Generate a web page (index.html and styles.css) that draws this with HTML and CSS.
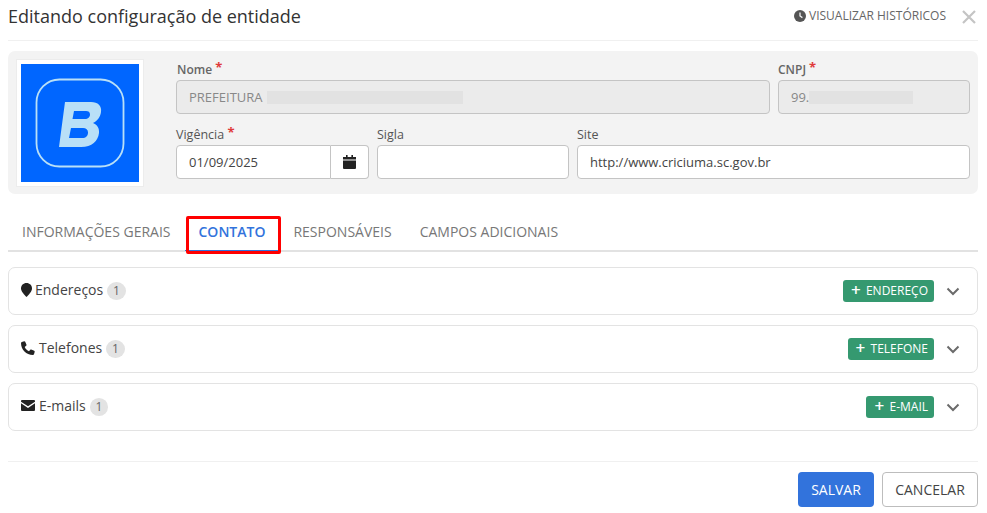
FILE: index.html
```html
<!DOCTYPE html>
<html lang="pt-BR">
<head>
<meta charset="utf-8">
<title>Editando configuração de entidade</title>
<link rel="stylesheet" href="styles.css">
</head>
<body>
<div class="modal">
  <header class="head">
    <h1 class="title">Editando configuração de entidade</h1>
    <div class="head-actions">
      <a class="history">
        <svg class="ic-clock" viewBox="0 0 12 12"><circle cx="6" cy="6" r="6" fill="#555"/><path d="M6 2.6V6l2.4 1.6" fill="none" stroke="#f3f3f3" stroke-width="1.3"/></svg>
        VISUALIZAR HISTÓRICOS
      </a>
      <svg class="ic-close" viewBox="0 0 14 14"><path d="M1 1l12 12M13 1L1 13" stroke="#c4c4c4" stroke-width="2.2" fill="none"/></svg>
    </div>
  </header>

  <section class="panel">
    <div class="logo-box">
      <div class="logo">
        <svg viewBox="0 0 118 118" class="logo-svg">
          <rect x="15.5" y="15.5" width="87" height="87" rx="23" fill="none" stroke="#b9e0f7" stroke-width="1.8"/>
          <path d="M44 38H70C77 38 81 42 80 48C79.500 53 76 57 72 59C76 60.500 78.500 64 78 69C77 77 71 83 60 83H38ZM53 47L51.500 55H64C67 55 69 53 69 50.500C69 48 67.500 47 65 47ZM50 64L48 74H61C65 74 67 72 67 68.500C67 65.500 65 64 62 64Z" fill="#b9e0f7" fill-rule="evenodd"/>
        </svg>
      </div>
    </div>
    <div class="fields">
      <div class="row row-top">
        <div class="field f-nome">
          <label class="lbl">Nome <span class="req">*</span></label>
          <div class="ctrl disabled"><span>PREFEITURA</span><span class="redact r-nome"></span></div>
        </div>
        <div class="field f-cnpj">
          <label class="lbl">CNPJ <span class="req">*</span></label>
          <div class="ctrl disabled"><span>99.</span><span class="redact r-cnpj"></span></div>
        </div>
      </div>
      <div class="row row-bottom">
        <div class="field f-vig">
          <label class="lbl">Vigência <span class="req">*</span></label>
          <div class="group">
            <div class="ctrl ctrl-date">01/09/2025</div>
            <div class="addon">
              <svg class="ic-cal" viewBox="0 0 13 14"><path d="M3 0h1.600v2H3zM8.400 0H10v2H8.400zM0 2h13v2.500H0zM0 5.500h13V13a1 1 0 0 1-1 1H1a1 1 0 0 1-1-1z" fill="#222"/></svg>
            </div>
          </div>
        </div>
        <div class="field f-sigla">
          <label class="lbl">Sigla</label>
          <div class="ctrl"></div>
        </div>
        <div class="field f-site">
          <label class="lbl">Site</label>
          <div class="ctrl">http://www.criciuma.sc.gov.br</div>
        </div>
      </div>
    </div>
  </section>

  <nav class="tabs">
    <a class="tab">INFORMAÇÕES GERAIS</a>
    <a class="tab active">CONTATO</a>
    <a class="tab">RESPONSÁVEIS</a>
    <a class="tab">CAMPOS ADICIONAIS</a>
  </nav>

  <section class="cards">
    <div class="card">
      <svg class="ic ic-pin" viewBox="0 0 11 14"><path d="M5.500 0C8.600 0 11 2.300 11 5.300 11 8.500 7.500 12 5.500 14 3.500 12 0 8.500 0 5.300 0 2.300 2.400 0 5.500 0z" fill="#222"/></svg>
      <span class="c-title t-end">Endereços</span><span class="badge">1</span>
      <span class="spacer"></span>
      <a class="add"><span class="plus">+</span>ENDEREÇO</a>
      <svg class="chev" viewBox="0 0 14 9"><path d="M1.500 1.500L7 7l5.500-5.500" fill="none" stroke="#6b6b6b" stroke-width="2"/></svg>
    </div>
    <div class="card">
      <svg class="ic ic-phone" viewBox="0 0 14 14"><path d="M3.200.300L.8 1C.300 1.200 0 1.600 0 2.100 0 8.700 5.300 14 11.900 14c.5 0 .9-.3 1.100-.8l.7-2.400c.1-.4-.1-.8-.5-1l-3-1.300c-.3-.1-.7 0-.9.300L8 10.300C5.900 9.300 4.700 8.100 3.700 6l1.500-1.300c.3-.2.4-.6.300-.9L4.200.800c-.2-.4-.6-.6-1-.5z" fill="#222"/></svg>
      <span class="c-title t-tel">Telefones</span><span class="badge">1</span>
      <span class="spacer"></span>
      <a class="add"><span class="plus">+</span>TELEFONE</a>
      <svg class="chev" viewBox="0 0 14 9"><path d="M1.500 1.500L7 7l5.500-5.500" fill="none" stroke="#6b6b6b" stroke-width="2"/></svg>
    </div>
    <div class="card">
      <svg class="ic ic-mail" viewBox="0 0 14 11"><path d="M1 0h12a1 1 0 0 1 1 1v.7L7 6.300 0 1.700V1a1 1 0 0 1 1-1zM0 3.300l7 4.600 7-4.600V10a1 1 0 0 1-1 1H1a1 1 0 0 1-1-1z" fill="#222"/></svg>
      <span class="c-title t-mail">E-mails</span><span class="badge">1</span>
      <span class="spacer"></span>
      <a class="add"><span class="plus">+</span>E-MAIL</a>
      <svg class="chev" viewBox="0 0 14 9"><path d="M1.500 1.500L7 7l5.500-5.500" fill="none" stroke="#6b6b6b" stroke-width="2"/></svg>
    </div>
  </section>

  <footer class="foot">
    <button class="btn primary">SALVAR</button>
    <button class="btn outline">CANCELAR</button>
  </footer>
</div>
</body>
</html>
```
FILE: styles.css
```css
* { box-sizing: border-box; }
html, body { margin: 0; padding: 0; background: #fff; }
body { font-family: "Open Sans", "Liberation Sans", sans-serif; color: #333; width: 987px; height: 513px; overflow: hidden; }
.modal { padding: 0 9px 0 8px; }

.head { height: 41px; border-bottom: 1px solid #f0f0f0; display: flex; justify-content: space-between; align-items: flex-start; }
.title { margin: 4px 0 0; font-size: 18px; line-height: 24px; font-weight: 400; color: #333; }
.head-actions { display: flex; align-items: center; padding-top: 8px; }
.history { display: flex; align-items: center; font-size: 12px; line-height: 16px; color: #666; width: 153px; margin-right: 15px; white-space: nowrap; }
.ic-clock { width: 12px; height: 12px; margin-right: 3px; }
.ic-close { width: 14px; height: 14px; margin: 2px 2px 0 0; }

.panel { margin-top: 10px; height: 143px; background: #f3f3f3; border-radius: 7px; display: flex; padding: 8px 8px 0 8px; }
.logo-box { width: 128px; height: 128px; background: #fff; border: 1px solid #ececec; padding: 4px; flex: none; }
.logo { width: 118px; height: 118px; background: #0066ff; }
.logo-svg { display: block; width: 118px; height: 118px; }
.fields { margin-left: 32px; flex: 1; display: flex; flex-direction: column; }
.row { display: flex; gap: 8px; }
.row-bottom { margin-top: 10px; }
.field { display: flex; flex-direction: column; }
.f-nome { width: 594px; }
.f-cnpj { width: 192px; }
.f-vig { width: 193px; }
.f-sigla { width: 192px; }
.f-site { width: 393px; }
.lbl { height: 21px; font-size: 12px; line-height: 21px; font-weight: 600; color: #666; white-space: nowrap; }
.f-nome .lbl { padding-left: 1px; }
.row-bottom .lbl { font-weight: 500; color: #555; font-size: 12.5px; }
.f-sigla .lbl, .f-site .lbl { font-weight: 400; }
.req { color: #e03a3a; font-size: 13px; font-weight: 700; line-height: 14px; position: relative; top: -2px; }
.ctrl { height: 34px; border: 1px solid #c4c4c4; border-radius: 4px; background: #fff; padding: 0 12px; font-size: 13px; line-height: 32px; color: #444; display: flex; align-items: center; white-space: nowrap; }
.disabled { background: #ebebeb; color: #888; }
.redact { display: inline-block; height: 13px; background: #e2e2e2; }
.r-nome { width: 196px; margin-left: 4px; }
.r-cnpj { width: 104px; }
.group { display: flex; }
.ctrl-date { flex: 1; border-radius: 4px 0 0 4px; }
.addon { width: 38px; height: 34px; border: 1px solid #c4c4c4; border-left: 0; border-radius: 0 4px 4px 0; background: #fff; display: flex; align-items: center; justify-content: center; }
.ic-cal { width: 13px; height: 14px; }

.tabs { margin-top: 22px; height: 36px; border-bottom: 2px solid #e2e2e2; display: flex; }
.tab { height: 34px; padding: 6px 14px 0; font-size: 14px; line-height: 20px; color: #777; white-space: nowrap; }
.active { height: 35px; color: #3273dc; font-weight: 600; border-bottom: 1px solid #3273dc; position: relative; }
.active::after { content: ""; box-sizing: border-box; position: absolute; left: 1px; right: -2px; top: 0; height: 38px; border: 3px solid #f00; border-radius: 2px; }

.cards { margin-top: 15px; display: flex; flex-direction: column; gap: 10px; }
.card { height: 48px; border: 1px solid #e3e3e3; border-radius: 7px; display: flex; align-items: center; padding: 0 17px 0 12px; }
.ic { flex: none; }
.ic-pin { width: 11px; height: 14px; margin: -3px 3px 0 0; }
.ic-phone { width: 14px; height: 14px; margin: -3px 4px 0 0; }
.ic-mail { width: 14px; height: 11px; margin: -3px 4px 0 0; }
.c-title { font-size: 14px; line-height: 20px; color: #444; margin-top: -3px; }
.badge { width: 18.5px; height: 18px; border-radius: 50%; background: #e3e3e3; color: #666; font-size: 12px; line-height: 18px; text-align: center; margin-left: 4px; margin-top: -1px; }
.spacer { flex: 1; }
.add { height: 22px; padding: 0 6px 0 8px; background: #359970; border-radius: 3px; color: #fff; font-size: 12px; font-weight: 500; line-height: 20px; display: flex; align-items: center; white-space: nowrap; }
.plus { width: 15px; font-size: 17px; font-weight: 600; line-height: 18px; margin-top: -2px; }
.chev { width: 14px; height: 9px; margin-left: 12px; flex: none; }

.foot { margin-top: 30px; padding-top: 10px; border-top: 1px solid #f0f0f0; display: flex; justify-content: flex-end; gap: 8px; }
.btn { height: 35px; border-radius: 4px; font-family: inherit; font-size: 14px; padding: 0; }
.primary { width: 76px; background: #3273dc; border: 0; color: #fff; }
.outline { width: 96px; background: #fff; border: 1px solid #bdbdbd; color: #444; }
```
